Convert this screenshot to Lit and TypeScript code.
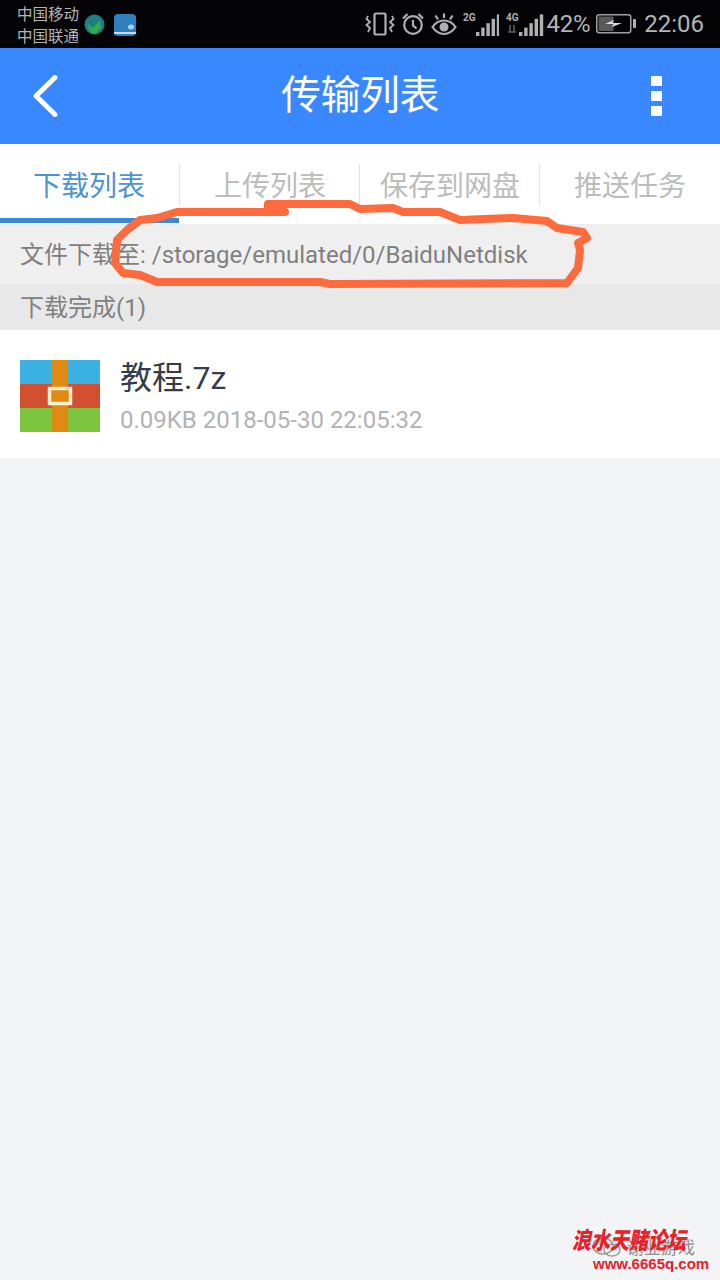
import { LitElement, html, css, svg } from "lit";
import { customElement } from "lit/decorators.js";

const bars = (count: number) =>
  svg`${Array.from({ length: count }, (_, i) => {
    const h = 4 + i * 4.4;
    return svg`<rect x=${i * 5.2} y=${21 - h} width="3.400" height=${h} fill="#b0b0b0" />`;
  })}`;

@customElement("app-root")
export class AppRoot extends LitElement {
  static styles = css`
    :host {
      display: block;
      position: relative;
      width: 720px;
      height: 1280px;
      overflow: hidden;
      background: #f3f4f6;
      font-family: Roboto, "Noto Sans CJK SC", sans-serif;
    }

    .status {
      height: 48px;
      background: #040406;
      display: flex;
      align-items: center;
      padding: 0 16px 0 17px;
      color: #b4b4b4;
    }

    .carriers {
      font-size: 15.5px;
      line-height: 22px;
      margin-top: 3px;
      color: #b4b4b4;
    }

    .app-icon {
      display: block;
      margin-left: 5px;
      margin-top: 1px;
    }

    .app-icon + .app-icon {
      margin-left: 9px;
    }

    .status-right {
      margin-left: auto;
      display: flex;
      align-items: center;
    }

    .status-right svg {
      display: block;
    }

    .gap-6 {
      margin-left: 6px;
    }

    .gap-7 {
      margin-left: 7px;
    }

    .pct {
      font-size: 24px;
      margin-left: 3px;
      letter-spacing: -0.3px;
    }

    .time {
      font-size: 24px;
      margin-left: 8px;
    }

    .appbar {
      height: 96px;
      background: #3a88ff;
      display: flex;
      align-items: center;
      justify-content: space-between;
      padding: 0 58px 0 32px;
      color: #fff;
      position: relative;
    }

    .appbar h1 {
      position: absolute;
      left: 0;
      right: 0;
      margin: 0;
      text-align: center;
      font-size: 40px;
      font-weight: 400;
      line-height: 96px;
      letter-spacing: -0.5px;
    }

    .appbar svg {
      display: block;
    }

    .tabs {
      height: 80px;
      background: #fff;
      display: flex;
    }

    .tab {
      position: relative;
      flex: 1 1 0;
      min-width: 0;
      display: flex;
      align-items: center;
      justify-content: center;
      font-size: 28px;
      color: #bcbcbc;
    }

    .tab.active {
      color: #4b94cf;
      text-indent: -2px;
    }

    .tab.active::after {
      content: "";
      position: absolute;
      left: 0;
      right: 1px;
      bottom: 1px;
      height: 5px;
      background: #3a88d8;
    }

    .tab + .tab::before {
      content: "";
      position: absolute;
      left: -1px;
      top: 20px;
      height: 42px;
      width: 1px;
      background: #e2e2e2;
    }

    .path {
      height: 60px;
      background: #efefef;
      display: flex;
      align-items: center;
      padding: 0 0 3px 20px;
      box-sizing: border-box;
      font-size: 24px;
      color: #7f7f7f;
    }

    .section {
      height: 46px;
      background: #e8e8e8;
      display: flex;
      align-items: center;
      padding: 0 0 3px 20px;
      box-sizing: border-box;
      font-size: 24px;
      color: #808080;
    }

    .row {
      height: 128px;
      background: #fff;
      display: flex;
      align-items: center;
      padding: 4px 20px 0;
      gap: 20px;
      box-sizing: border-box;
    }

    .row svg {
      display: block;
      flex-shrink: 0;
    }

    .name {
      font-size: 32px;
      line-height: 44px;
      margin-top: 1px;
      color: #333c48;
    }

    .meta {
      font-size: 24px;
      line-height: 34px;
      margin-top: 3px;
      color: #b2b2b2;
    }

    .scribble {
      position: absolute;
      left: 0;
      top: 0;
      pointer-events: none;
    }

    .wm-gray {
      position: absolute;
      left: 627px;
      top: 1238px;
      font-size: 17px;
      line-height: 20px;
      color: #8d8d8d;
      white-space: nowrap;
    }

    .wm-bubble {
      position: absolute;
      left: 591px;
      top: 1236px;
    }

    .wm-title {
      position: absolute;
      left: 572px;
      top: 1224px;
      font-family: "Noto Sans CJK SC", serif;
      font-size: 19px;
      line-height: 24px;
      font-weight: 900;
      font-style: italic;
      color: #e8202a;
      white-space: nowrap;
      transform: scaleY(1.25);
      transform-origin: top left;
    }

    .wm-url {
      position: absolute;
      left: 593px;
      top: 1255px;
      font-family: "Liberation Sans", sans-serif;
      font-size: 15px;
      line-height: 18px;
      font-weight: 700;
      color: #e8202a;
      white-space: nowrap;
    }
  `;

  private _statusIcons() {
    return html`
      <svg width="30" height="24" viewBox="0 0 30 24" fill="none" stroke="#b0b0b0" stroke-width="2.200">
        <rect x="9.500" y="1.500" width="11" height="21" rx="1.500" />
        <path d="M3 4l-1.500 3L5 10l-3.500 3L5 16l-2 4M27 4l1.500 3L25 10l3.500 3L25 16l2 4" stroke-width="1.800" />
      </svg>
      <svg class="gap-6" width="24" height="24" viewBox="0 0 24 24" fill="none" stroke="#b0b0b0" stroke-width="2.200">
        <circle cx="12" cy="13" r="8.800" />
        <path d="M12 8v5.500l3.500 3M2 6.500L6.500 2M22 6.500L17.500 2" />
      </svg>
      <svg class="gap-6" width="26" height="24" viewBox="0 0 26 24" fill="none" stroke="#b0b0b0" stroke-width="2.200">
        <path d="M1.500 15c3-4.500 7-6.500 11.500-6.500S21.500 10.500 24.500 15c-3 4.500-7 7-11.500 7S4.500 19.500 1.500 15z" />
        <circle cx="13" cy="15" r="4.500" fill="#b0b0b0" stroke="none" />
        <path d="M7 7.500L4.500 3.500M13 6V1.500M19 7.500L21.500 3.500" />
      </svg>
      <svg class="gap-6" width="36" height="28" viewBox="0 0 36 28">
        <text x="0" y="11" font-size="10" font-weight="700" fill="#b0b0b0" font-family="Roboto, sans-serif">2G</text>
        <g transform="translate(13 5)">${bars(5)}</g>
      </svg>
      <svg class="gap-7" width="38" height="28" viewBox="0 0 38 28">
        <text x="0" y="11" font-size="10" font-weight="700" fill="#b0b0b0" font-family="Roboto, sans-serif">4G</text>
        <path d="M2 22h8M4 15v7M8 15v7" stroke="#5e5e5e" stroke-width="1.500" />
        <g transform="translate(13 5)">${bars(5)}</g>
      </svg>
    `;
  }

  render() {
    return html`
      <div class="status">
        <div class="carriers">中国移动<br />中国联通</div>
        <svg class="app-icon" width="21" height="21" viewBox="0 0 21 21">
          <circle cx="10.500" cy="10.500" r="10" fill="#1c7f86" />
          <path d="M3 9l6 5 7-8 1 8-6 6-5-2z" fill="#35a84a" />
        </svg>
        <svg class="app-icon" width="22" height="22" viewBox="0 0 22 22">
          <rect width="22" height="22" rx="4" fill="#2f7fbe" />
          <rect y="18" width="22" height="2" fill="#c9dcec" />
          <ellipse cx="17" cy="13" rx="3" ry="2.500" fill="#a9cfe8" />
        </svg>
        <div class="status-right">
          ${this._statusIcons()}
          <span class="pct">42%</span>
          <svg class="gap-6" width="40" height="20" viewBox="0 0 40 20" fill="none">
            <rect x="0.750" y="0.750" width="34" height="18" rx="2.500" stroke="#a0a0a0" stroke-width="1.500" />
            <rect x="2.500" y="2.500" width="15" height="14.500" fill="#5a5a5a" />
            <path d="M9 10l9-4-1.500 3H26l-10 4 1.500-3z" fill="#dcdcdc" />
            <rect x="37" y="5" width="3" height="9" rx="1" fill="#b0b0b0" />
          </svg>
          <span class="time">22:06</span>
        </div>
      </div>

      <header class="appbar">
        <h1>传输列表</h1>
        <svg width="26" height="42" viewBox="0 0 26 42" fill="none" stroke="#fff" stroke-width="5" stroke-linecap="round" stroke-linejoin="round">
          <path d="M23 2.500L4 21l19 18.500" />
        </svg>
        <svg width="11" height="40" viewBox="0 0 11 40" fill="#fff">
          <rect width="11" height="10" />
          <rect y="15" width="11" height="10" />
          <rect y="30" width="11" height="10" />
        </svg>
      </header>

      <nav class="tabs">
        <div class="tab active">下载列表</div>
        <div class="tab">上传列表</div>
        <div class="tab">保存到网盘</div>
        <div class="tab">推送任务</div>
      </nav>

      <div class="path">文件下载至: /storage/emulated/0/BaiduNetdisk</div>
      <div class="section">下载完成(1)</div>

      <div class="row">
        <svg width="80" height="72" viewBox="0 0 80 72">
          <rect width="80" height="24" fill="#3cb2e4" />
          <rect y="24" width="80" height="24" fill="#d2502f" />
          <rect y="48" width="80" height="24" fill="#7cc63f" />
          <rect x="32" width="16" height="72" fill="#e08a12" />
          <rect x="29.500" y="28.500" width="21" height="15" fill="#e08a12" stroke="#fbeed2" stroke-width="3.500" />
        </svg>
        <div>
          <div class="name">教程.7z</div>
          <div class="meta">0.09KB 2018-05-30 22:05:32</div>
        </div>
      </div>

      <svg class="scribble" width="720" height="300" viewBox="0 0 720 300" fill="none" stroke="#ff6b3d" stroke-width="8" stroke-linecap="round" stroke-linejoin="round">
        <path d="M285 212H177L157 218L140 220L128 229L117 240L115 263L123 273L140 275L157 282H320L330 284L567 283L578 268L580 250L578 243L587 238L583 232L557 228L547 221L513 218L460 220L440 212L403 212L393 208L360 209L350 204H268V210" />
      </svg>

      <svg class="wm-bubble" width="32" height="24" viewBox="0 0 32 24" fill="none" stroke="#9a9a9a" stroke-width="1.500">
        <ellipse cx="12" cy="10" rx="10" ry="8" />
        <ellipse cx="21" cy="14" rx="8" ry="6" />
      </svg>
      <div class="wm-gray">谢业游戏</div>
      <div class="wm-title">浪水天赌论坛</div>
      <div class="wm-url">www.6665q.com</div>
    `;
  }
}
